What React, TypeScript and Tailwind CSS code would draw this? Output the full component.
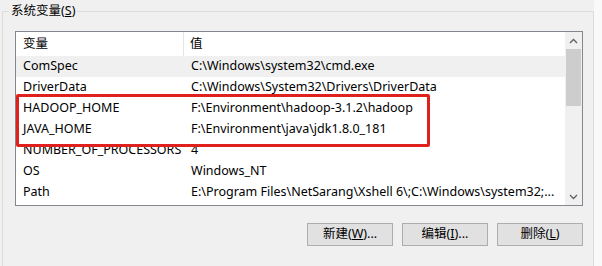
import React from 'react';

const rows: { name: string; value: string; hover?: boolean }[] = [
    { name: 'ComSpec', value: 'C:\\Windows\\system32\\cmd.exe', hover: true },
    { name: 'DriverData', value: 'C:\\Windows\\System32\\Drivers\\DriverData' },
    { name: 'HADOOP_HOME', value: 'F:\\Environment\\hadoop-3.1.2\\hadoop' },
    { name: 'JAVA_HOME', value: 'F:\\Environment\\java\\jdk1.8.0_181' },
    { name: 'NUMBER_OF_PROCESSORS', value: '4' },
    { name: 'OS', value: 'Windows_NT' },
    { name: 'Path', value: 'E:\\Program Files\\NetSarang\\Xshell 6\\;C:\\Windows\\system32;...' },
];

const Chevron = ({ down }: { down?: boolean }) => (
    <svg width="9" height="6" viewBox="0 0 9 6" className={down ? 'rotate-180' : ''}>
        <path d="M1 5 L4.5 1.5 L8 5" fill="none" stroke="#606060" strokeWidth="1.3" />
    </svg>
);

const Btn = ({ label, hot, tail }: { label: string; hot: string; tail: string }) => (
    <button className="w-[86px] h-[23px] bg-[#e1e1e1] border border-[#adadad] text-[12.5px] text-black flex items-center justify-center">
        {label}(<span className="underline">{hot}</span>){tail}
    </button>
);

export default function App() {
    return (
        <div
            className="relative w-[602px] h-[266px] bg-[#f0f0f0] flex overflow-hidden text-[12.5px] text-black"
            style={{ fontFamily: '"Noto Sans", "Noto Sans CJK SC", sans-serif' }}
        >
            <div className="w-[594px] pt-[11px] pl-[2px]">
                {/* group box */}
                <div className="relative w-[592px] h-[260px] border border-b-0 border-[#dcdcdc] pl-[12px] pt-[19px] pr-[10px]">
                    <span className="absolute -top-[10px] left-[6px] px-[2px] bg-[#f0f0f0] leading-[18px]">
                        系统变量(<span className="underline">S</span>)
                    </span>

                    {/* list view */}
                    <div className="w-[568px] h-[175px] border border-[#828790] bg-white flex">
                        <div className="flex-1 flex flex-col overflow-hidden">
                            <div className="h-[24px] flex items-center">
                                <div className="w-[168px] h-full pl-[7px] flex items-center border-r border-[#e5e5e5]">变量</div>
                                <div className="pl-[6px]">值</div>
                            </div>
                            {rows.map((r) => (
                                <div
                                    key={r.name}
                                    className={`h-[21px] flex items-center whitespace-nowrap ${r.hover ? 'bg-[#f0f0f0]' : ''}`}
                                >
                                    <div className="w-[168px] shrink-0 pl-[7px] overflow-hidden">{r.name}</div>
                                    <div className="pl-[7px]">{r.value}</div>
                                </div>
                            ))}
                        </div>
                        {/* scrollbar */}
                        <div className="w-[17px] bg-[#f0f0f0] flex flex-col items-center">
                            <div className="h-[17px] flex items-center justify-center">
                                <Chevron />
                            </div>
                            <div className="w-[15px] h-[57px] bg-[#cdcdcd]" />
                            <div className="flex-1" />
                            <div className="h-[17px] flex items-center justify-center">
                                <Chevron down />
                            </div>
                        </div>
                    </div>

                    {/* buttons */}
                    <div className="flex justify-end gap-[9px] mt-[17px] w-[568px]">
                        <Btn label="新建" hot="W" tail="..." />
                        <Btn label="编辑" hot="I" tail="..." />
                        <Btn label="删除" hot="L" tail="" />
                    </div>
                </div>
            </div>
            <div className="flex-1 bg-[#f9f9f9]" />

            {/* red highlight */}
            <div className="absolute left-[16px] top-[94px] w-[414px] h-[53px] border-[3px] border-[#e0201c] rounded-[2px]" />
        </div>
    );
}
